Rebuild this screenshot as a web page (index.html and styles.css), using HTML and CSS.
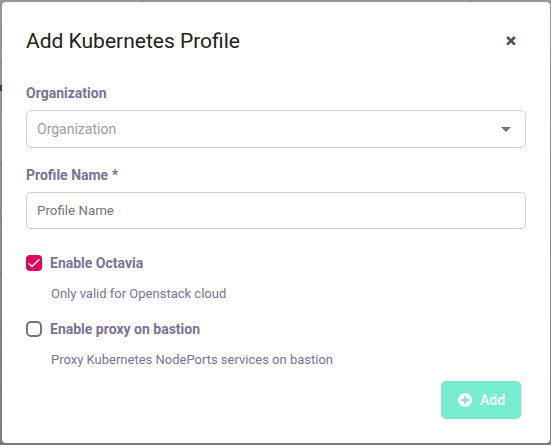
FILE: index.html
```html
<!DOCTYPE html>
<html lang="en">
<head>
<meta charset="utf-8">
<title>Add Kubernetes Profile</title>
<link rel="stylesheet" href="styles.css">
</head>
<body>
<div class="backdrop">
  <form class="modal">
    <header class="modal-header">
      <h1 class="title">Add Kubernetes Profile</h1>
      <button class="close" type="button" aria-label="Close">
        <svg width="10" height="10" viewBox="0 0 10 10"><path d="M1.1 1 8.9 8.6M8.9 1 1.1 8.6" stroke="#4d5560" stroke-width="2.7" fill="none"/></svg>
      </button>
    </header>
    <label class="label">Organization</label>
    <div class="control select">
      <span>Organization</span>
      <svg width="10" height="5" viewBox="0 0 10 5"><path d="M0 0h10L5 5z" fill="#757575"/></svg>
    </div>
    <label class="label">Profile Name *</label>
    <div class="control input"><span>Profile Name</span></div>
    <div class="option">
      <span class="box checked"><svg width="16" height="16" viewBox="0 0 16 16"><path d="M2.6 8.2 6 11.5 13.4 4.2" stroke="#fff" stroke-width="1.6" fill="none"/></svg></span>
      <span class="option-label">Enable Octavia</span>
    </div>
    <p class="hint">Only valid for Openstack cloud</p>
    <div class="option">
      <span class="box"></span>
      <span class="option-label">Enable proxy on bastion</span>
    </div>
    <p class="hint">Proxy Kubernetes NodePorts services on bastion</p>
    <footer class="footer">
      <button class="add" type="button">
        <svg width="14" height="14" viewBox="0 0 14 14"><circle cx="7" cy="7" r="7" fill="#fff"/><path d="M7 3.2v7.6M3.2 7h7.6" stroke="#77edd0" stroke-width="2.2"/></svg>
        <span>Add</span>
      </button>
    </footer>
  </form>
</div>
</body>
</html>
```
FILE: styles.css
```css
* { box-sizing: border-box; }
body { margin: 0; font-family: Roboto, "Liberation Sans", sans-serif; }
.backdrop {
  width: 551px;
  height: 445px;
  padding: 2px 1px 2px 2px;
  background:
    linear-gradient(#2c3d7c, #2c3d7c) 0 85px / 2px 6px no-repeat,
    linear-gradient(#77757a, #77757a) 0 62px / 2px 1px no-repeat,
    linear-gradient(#77757a, #77757a) 0 164px / 2px 1px no-repeat,
    linear-gradient(#77757a, #77757a) 0 219px / 2px 1px no-repeat,
    linear-gradient(#77757a, #77757a) 0 274px / 2px 1px no-repeat,
    linear-gradient(#77757a, #77757a) 0 329px / 2px 1px no-repeat,
    linear-gradient(#77757a, #77757a) 142px 0 / 1px 2px no-repeat,
    linear-gradient(#77757a, #77757a) 470px 0 / 1px 2px no-repeat,
    linear-gradient(#98969b, #8c8c8c 50%, #7d7b80);
}
.modal {
  height: 441px;
  padding: 24px 24px 0;
  background: #fff;
  border-radius: 4px;
}
.modal-header {
  display: flex;
  justify-content: space-between;
  height: 54px;
}
.title {
  margin: 0;
  font-size: 21px;
  font-weight: 400;
  line-height: 30px;
  color: #212121;
}
.close {
  display: flex;
  width: 20px;
  height: 30px;
  margin-right: 5px;
  padding: 0;
  border: 0;
  background: none;
  align-items: center;
  justify-content: center;
}
.label {
  display: block;
  height: 30px;
  font-size: 14px;
  font-weight: 700;
  line-height: 26px;
  color: #7b7199;
}
.control {
  display: flex;
  align-items: center;
  justify-content: space-between;
  padding: 0 14px 0 10px;
  border: 1px solid #cfccdb;
  border-radius: 5px;
}
.select {
  height: 38px;
  margin-bottom: 14px;
  font-size: 14px;
  color: #9b9b9b;
}
.input {
  height: 37px;
  margin-bottom: 24px;
  font-size: 13.333px;
  color: #757575;
}
.option {
  display: flex;
  align-items: center;
  gap: 8px;
  height: 20px;
}
.box {
  width: 16px;
  height: 16px;
  border: 2px solid #757575;
  border-radius: 5px;
}
.box svg { display: block; }
.checked { border: 0; border-radius: 4px; background: #e6005c; }
.option-label {
  font-size: 14px;
  font-weight: 700;
  color: #7b7199;
}
.hint {
  height: 20px;
  margin: 11px 0 15px 25px;
  font-size: 13px;
  line-height: 20px;
  color: #7b7199;
}
.footer {
  display: flex;
  justify-content: flex-end;
  padding-right: 5px;
  margin-top: -4px;
}
.add {
  display: flex;
  align-items: center;
  gap: 8px;
  width: 80px;
  height: 38px;
  padding: 0 0 0 17px;
  border: 0;
  border-radius: 5px;
  background: #77edd0;
  color: #fff;
  font: 500 14px Roboto, sans-serif;
}
```
